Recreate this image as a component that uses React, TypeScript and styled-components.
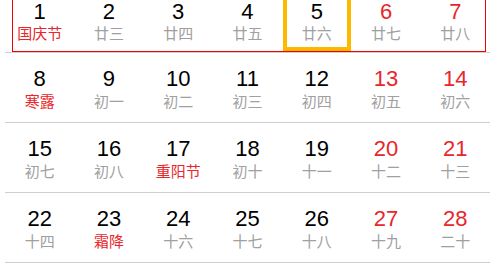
import React from "react";
import styled, { createGlobalStyle } from "styled-components";

const GlobalStyle = createGlobalStyle`
  html, body {
    margin: 0;
    padding: 0;
    background: #fff;
    overflow: hidden;
  }
`;

const Calendar = styled.div`
  width: 485px;
  margin-left: 5px;
`;

// the first week is scrolled half out of view, so it is shorter
const WeekRow = styled.div<{ $active?: boolean; $partial?: boolean }>`
  position: relative;
  display: grid;
  grid-template-columns: repeat(7, 1fr);
  height: ${(p) => (p.$partial ? "53px" : "70px")};
  box-sizing: border-box;
  border-bottom: 1px solid #cfcfcf;

  ${(p) =>
    p.$active &&
    `
    &::after {
      content: "";
      position: absolute;
      left: 7px;
      right: 4px;
      top: -2px;
      bottom: 0;
      border: 1px solid #f00000;
      pointer-events: none;
    }
  `}
`;

const DayCell = styled.div<{ $today?: boolean; $partial?: boolean }>`
  position: relative;
  display: flex;
  flex-direction: column;
  align-items: center;
  padding-top: ${(p) => (p.$partial ? "0" : "13px")};

  ${(p) =>
    p.$today &&
    `
    &::before {
      content: "";
      position: absolute;
      left: 1px;
      right: 0;
      top: -4px;
      bottom: 1px;
      border: 4px solid #ffb800;
    }
  `}
`;

const DayNum = styled.span<{ $weekend?: boolean; $partial?: boolean }>`
  display: block;
  position: relative;
  font-family: "Liberation Sans", Arial, sans-serif;
  font-size: 22px;
  line-height: ${(p) => (p.$partial ? "24px" : "26px")};
  color: ${(p) => (p.$weekend ? "#e8262b" : "#000")};
`;

const Lunar = styled.span<{ $festival?: boolean }>`
  display: block;
  position: relative;
  font-family: "Noto Sans CJK SC", sans-serif;
  font-size: 15px;
  line-height: 18px;
  color: ${(p) => (p.$festival ? "#e8262b" : "#a0a0a0")};
`;

type Day = { d: number; lunar: string; festival?: boolean };

const weeks: Day[][] = [
  [
    { d: 1, lunar: "国庆节", festival: true },
    { d: 2, lunar: "廿三" },
    { d: 3, lunar: "廿四" },
    { d: 4, lunar: "廿五" },
    { d: 5, lunar: "廿六" },
    { d: 6, lunar: "廿七" },
    { d: 7, lunar: "廿八" },
  ],
  [
    { d: 8, lunar: "寒露", festival: true },
    { d: 9, lunar: "初一" },
    { d: 10, lunar: "初二" },
    { d: 11, lunar: "初三" },
    { d: 12, lunar: "初四" },
    { d: 13, lunar: "初五" },
    { d: 14, lunar: "初六" },
  ],
  [
    { d: 15, lunar: "初七" },
    { d: 16, lunar: "初八" },
    { d: 17, lunar: "重阳节", festival: true },
    { d: 18, lunar: "初十" },
    { d: 19, lunar: "十一" },
    { d: 20, lunar: "十二" },
    { d: 21, lunar: "十三" },
  ],
  [
    { d: 22, lunar: "十四" },
    { d: 23, lunar: "霜降", festival: true },
    { d: 24, lunar: "十六" },
    { d: 25, lunar: "十七" },
    { d: 26, lunar: "十八" },
    { d: 27, lunar: "十九" },
    { d: 28, lunar: "二十" },
  ],
];

const TODAY = 5;

export default function App() {
  return (
    <>
      <GlobalStyle />
      <Calendar>
        {weeks.map((week, wi) => {
          const partial = wi === 0;
          return (
            <WeekRow
              key={wi}
              $partial={partial}
              $active={week.some((x) => x.d === TODAY)}
            >
              {week.map((day, i) => (
                <DayCell key={day.d} $today={day.d === TODAY} $partial={partial}>
                  <DayNum $weekend={i >= 5} $partial={partial}>
                    {day.d}
                  </DayNum>
                  <Lunar $festival={day.festival}>{day.lunar}</Lunar>
                </DayCell>
              ))}
            </WeekRow>
          );
        })}
      </Calendar>
    </>
  );
}
